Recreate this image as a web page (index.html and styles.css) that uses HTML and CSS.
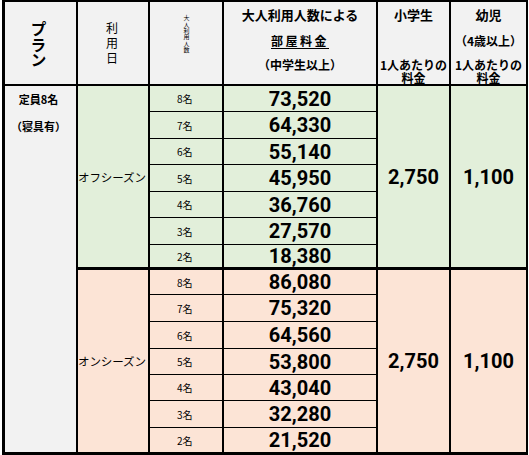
FILE: index.html
```html
<!DOCTYPE html>
<html lang="ja">
<head>
<meta charset="utf-8">
<title>料金表</title>
<link rel="stylesheet" href="styles.css">
</head>
<body>
<div class="rate">
  <div class="cell hd vcell plan-h"><span class="vt">プラン</span></div>
  <div class="cell hd vcell day-h"><span class="vt">利用日</span></div>
  <div class="cell hd vcell num-h"><span class="vt">大人利用人数</span></div>
  <div class="cell hd txt-h">
    <div class="ln">大人利用人数による</div>
    <div class="ln mid"><span class="ul">部屋料金</span></div>
    <div class="pair">（中学生以上）</div>
  </div>
  <div class="cell hd txt-h">
    <div class="ln">小学生</div>
    <div class="ln mid">&nbsp;</div>
    <div class="pair">1人あたりの<br>料金</div>
  </div>
  <div class="cell hd txt-h last-col">
    <div class="ln">幼児</div>
    <div class="ln mid">（4歳以上）</div>
    <div class="pair">1人あたりの<br>料金</div>
  </div>

  <div class="cell plan-b">
    <div class="pl">定員8名</div>
    <div class="pl second">（寝具有）</div>
  </div>

  <div class="cell season off grp">オフシーズン</div>
  <div class="cell num off">8名</div>
  <div class="cell price off">73,520</div>
  <div class="cell flat off grp">2,750</div>
  <div class="cell flat off grp last-col">1,100</div>
  <div class="cell num off">7名</div>
  <div class="cell price off">64,330</div>
  <div class="cell num off">6名</div>
  <div class="cell price off">55,140</div>
  <div class="cell num off">5名</div>
  <div class="cell price off">45,950</div>
  <div class="cell num off">4名</div>
  <div class="cell price off">36,760</div>
  <div class="cell num off">3名</div>
  <div class="cell price off">27,570</div>
  <div class="cell num off end">2名</div>
  <div class="cell price off end">18,380</div>

  <div class="cell season on grp">オンシーズン</div>
  <div class="cell num on">8名</div>
  <div class="cell price on">86,080</div>
  <div class="cell flat on grp">2,750</div>
  <div class="cell flat on grp last-col">1,100</div>
  <div class="cell num on">7名</div>
  <div class="cell price on">75,320</div>
  <div class="cell num on">6名</div>
  <div class="cell price on">64,560</div>
  <div class="cell num on">5名</div>
  <div class="cell price on">53,800</div>
  <div class="cell num on">4名</div>
  <div class="cell price on">43,040</div>
  <div class="cell num on">3名</div>
  <div class="cell price on">32,280</div>
  <div class="cell num on end">2名</div>
  <div class="cell price on end">21,520</div>
</div>
</body>
</html>
```

FILE: styles.css
```css
* {
  box-sizing: border-box;
}

html, body {
  margin: 0;
  padding: 0;
  background: #ffffff;
}

body {
  font-family: "Noto Sans CJK JP", "Noto Sans", sans-serif;
  color: #000000;
}

.rate {
  display: grid;
  grid-template-columns: 73px 72px 74px 154px 73px 77px;
  grid-template-rows: 84px 26px 27px 26px 27px 26px 27px 25px 25px 27px 27px 26px 26px 27px 27px;
  width: fit-content;
  margin-left: 2px;
  border-left: 3px solid #000;
  border-top: 2px solid #000;
}

.cell {
  border-right: 2px solid #000;
  border-bottom: 1px solid #000;
  min-width: 0;
  overflow: visible;
}

/* header */
.hd {
  background: #f2f2f2;
  border-bottom: 2px solid #000;
  text-align: center;
}

.vcell {
  display: flex;
  justify-content: center;
  align-items: flex-start;
}

.vt {
  writing-mode: vertical-rl;
  text-orientation: upright;
  white-space: nowrap;
}

.plan-h {
  padding-top: 19px;
  padding-right: 4px;
  font-size: 16px;
  font-weight: 700;
  line-height: 16px;
}

.plan-h .vt {
  letter-spacing: -0.5px;
}

.day-h {
  padding-top: 20px;
  padding-right: 3px;
  font-size: 12px;
  line-height: 12px;
}

.day-h .vt {
  letter-spacing: 3px;
}

.num-h {
  padding-top: 13px;
  font-size: 6px;
  line-height: 6px;
}

.num-h .vt {
  letter-spacing: 0.4px;
}

.txt-h {
  padding-top: 5.5px;
  font-weight: 700;
  font-size: 13px;
  white-space: nowrap;
}

.txt-h .ln {
  line-height: 13px;
}

.txt-h .mid {
  margin-top: 13.5px;
  font-size: 12px;
}

.txt-h .pair {
  margin-top: 12px;
  line-height: 12.5px;
  font-size: 12px;
}

.ul {
  text-decoration: underline;
  text-underline-offset: 2px;
  letter-spacing: 2.5px;
}

/* plan body */
.plan-b {
  grid-row: span 14;
  background: #f2f2f2;
  border-bottom: 3px solid #000;
  padding-top: 6.5px;
  padding-right: 4px;
  text-align: center;
  font-size: 11px;
  font-weight: 700;
}

.plan-b .pl {
  line-height: 13px;
}

.plan-b .second {
  margin-top: 14px;
}

/* body cells */
.off {
  background: #e2efda;
}

.on {
  background: #fce4d6;
}

.grp {
  grid-row: span 7;
  border-bottom: 3px solid #000;
}

.end {
  border-bottom: 3px solid #000;
}

.season {
  display: flex;
  align-items: center;
  justify-content: flex-start;
  font-size: 11.5px;
  white-space: nowrap;
  letter-spacing: -0.1px;
}

.num {
  display: flex;
  align-items: center;
  padding-left: 27px;
  font-size: 10px;
}

.price,
.flat {
  display: flex;
  align-items: center;
  justify-content: center;
  font-family: Roboto, "Liberation Sans", sans-serif;
  font-weight: 700;
  font-size: 20px;
}
```
